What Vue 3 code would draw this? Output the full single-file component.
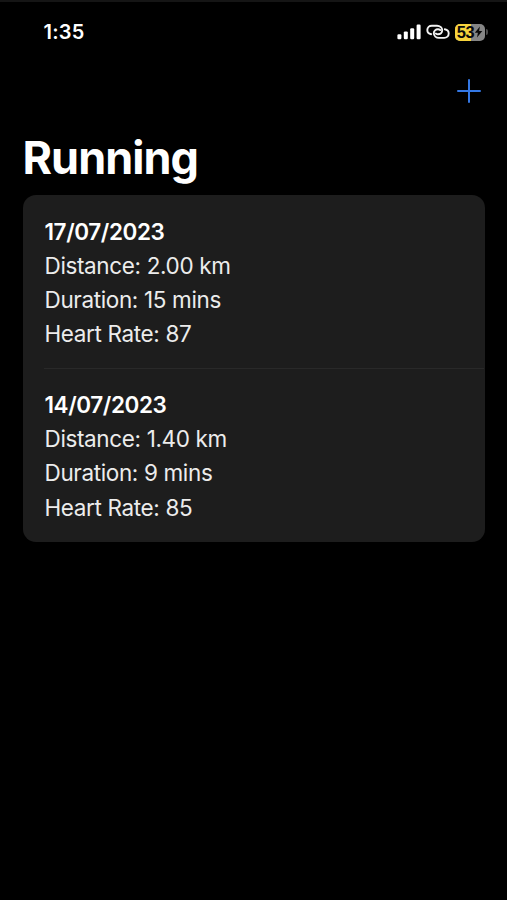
<template>
  <div class="screen">
    <!-- 状态栏 -->
    <div class="status-bar">
      <span class="clock">1:35</span>
      <div class="status-icons">
        <svg class="signal" width="24" height="16" viewBox="0 0 24 16" fill="#fff">
          <rect x="0.4" y="10.2" width="4" height="5" rx="1.2" />
          <rect x="6.8" y="7.4" width="4" height="7.8" rx="1.2" />
          <rect x="13.2" y="4.2" width="4" height="11" rx="1.2" />
          <rect x="19.6" y="0.6" width="4" height="14.6" rx="1.2" />
        </svg>
        <svg
          class="hotspot"
          width="24"
          height="16"
          viewBox="0 0 24 16"
          fill="none"
          stroke="#f2f2f2"
          stroke-width="1.9"
          stroke-linecap="round"
        >
          <path d="M5.2 10.2C2.9 9.8 1.3 8.2 1.3 6C1.3 3.4 3.3 1.7 5.8 1.7H11C13.8 1.7 16.2 3.7 16.2 6.3C16.2 8.7 14.3 10.3 12 10.3C11.1 10.3 10.4 10 9.8 9.5" />
          <path d="M18.8 5.3C21.1 5.7 22.7 7.3 22.7 9.5C22.7 12.1 20.7 13.9 18.2 13.9H13C10.2 13.9 7.8 11.9 7.8 9.3C7.8 6.9 9.7 5.3 12 5.3C12.9 5.3 13.6 5.6 14.2 6.1" />
        </svg>
        <div class="battery">
          <div class="battery-body">
            <div class="battery-level" :style="{ width: battery + '%' }"></div>
            <div class="battery-label">
              <span>{{ battery }}</span>
              <svg width="9" height="12" viewBox="0 0 8 12" fill="#0a0a0a">
                <path d="M5.4 0.6L0.3 6.7H3.4L2.5 11.4L7.8 5H4.6Z" />
              </svg>
            </div>
          </div>
          <div class="battery-cap"></div>
        </div>
      </div>
    </div>

    <!-- 工具栏 -->
    <div class="toolbar">
      <button class="add-btn" aria-label="Add">
        <svg width="24" height="24" viewBox="0 0 24 24" stroke="#3478e5" stroke-width="2" stroke-linecap="round">
          <path d="M12 1V23M1 12H23" />
        </svg>
      </button>
    </div>

    <h1 class="title">Running</h1>

    <!-- 跑步记录 -->
    <div class="run-list">
      <div v-for="run in runs" :key="run.date" class="run-item">
        <div class="run-date">{{ run.date }}</div>
        <div class="run-line">Distance: {{ run.distance.toFixed(2) }} km</div>
        <div class="run-line">Duration: {{ run.duration }} mins</div>
        <div class="run-line">Heart Rate: {{ run.heartRate }}</div>
      </div>
    </div>
  </div>
</template>

<script setup>
import { ref } from 'vue'

const battery = ref(53)

const runs = ref([
  { date: '17/07/2023', distance: 2, duration: 15, heartRate: 87 },
  { date: '14/07/2023', distance: 1.4, duration: 9, heartRate: 85 }
])
</script>

<style>
body {
  margin: 0;
  background: #000;
}
</style>

<style scoped>
.screen {
  box-sizing: border-box;
  width: 100%;
  height: 900px;
  overflow: hidden;
  background: #000;
  border-top: 2px solid #151515;
  color: #fff;
  font-family: Inter, 'Liberation Sans', sans-serif;
}

/* 状态栏 */
.status-bar {
  display: flex;
  justify-content: space-between;
  align-items: center;
  height: 60px;
  padding: 0 19px 0 43.5px;
}

.clock {
  font-size: 20px;
  font-weight: 600;
  letter-spacing: 0.2px;
}

.status-icons {
  display: flex;
  align-items: center;
}

.hotspot {
  margin-left: 5px;
}

.battery {
  display: flex;
  align-items: center;
  margin-left: 5px;
}

.battery-body {
  position: relative;
  width: 30px;
  height: 17px;
  border-radius: 5px;
  background: #858585;
  overflow: hidden;
}

.battery-level {
  height: 100%;
  background: #f7d43c;
}

.battery-label {
  position: absolute;
  inset: 0;
  display: flex;
  align-items: center;
  justify-content: center;
  color: #0a0a0a;
  font-family: 'Liberation Sans', sans-serif;
  font-size: 16.5px;
  line-height: 17px;
  font-weight: 700;
  letter-spacing: -0.4px;
}

.battery-cap {
  width: 2px;
  height: 6px;
  margin-left: 1px;
  border-radius: 0 2px 2px 0;
  background: #4a4a4a;
}

/* 工具栏 */
.toolbar {
  display: flex;
  justify-content: flex-end;
  height: 58px;
  padding: 16.5px 26px 0 0;
  box-sizing: border-box;
}

.add-btn {
  display: block;
  width: 24px;
  height: 24px;
  padding: 0;
  border: none;
  background: none;
}

.title {
  margin: 10px 0 0 22.5px;
  font-size: 45px;
  line-height: 56px;
  font-weight: 700;
  letter-spacing: -0.95px;
}

/* 记录列表 */
.run-list {
  margin: 9px 22px 0 22.5px;
  border-radius: 13px;
  background: #1d1d1d;
}

.run-item {
  position: relative;
  padding: 19.6px 0 17px 22px;
  font-size: 22.5px;
  line-height: 34.2px;
}

.run-item + .run-item::before {
  content: '';
  position: absolute;
  top: 0;
  left: 21px;
  right: 1px;
  height: 1px;
  background: #292929;
}

.run-date {
  font-weight: 600;
  letter-spacing: -0.42px;
}

.run-line {
  color: #ececec;
  letter-spacing: -0.36px;
}
</style>
